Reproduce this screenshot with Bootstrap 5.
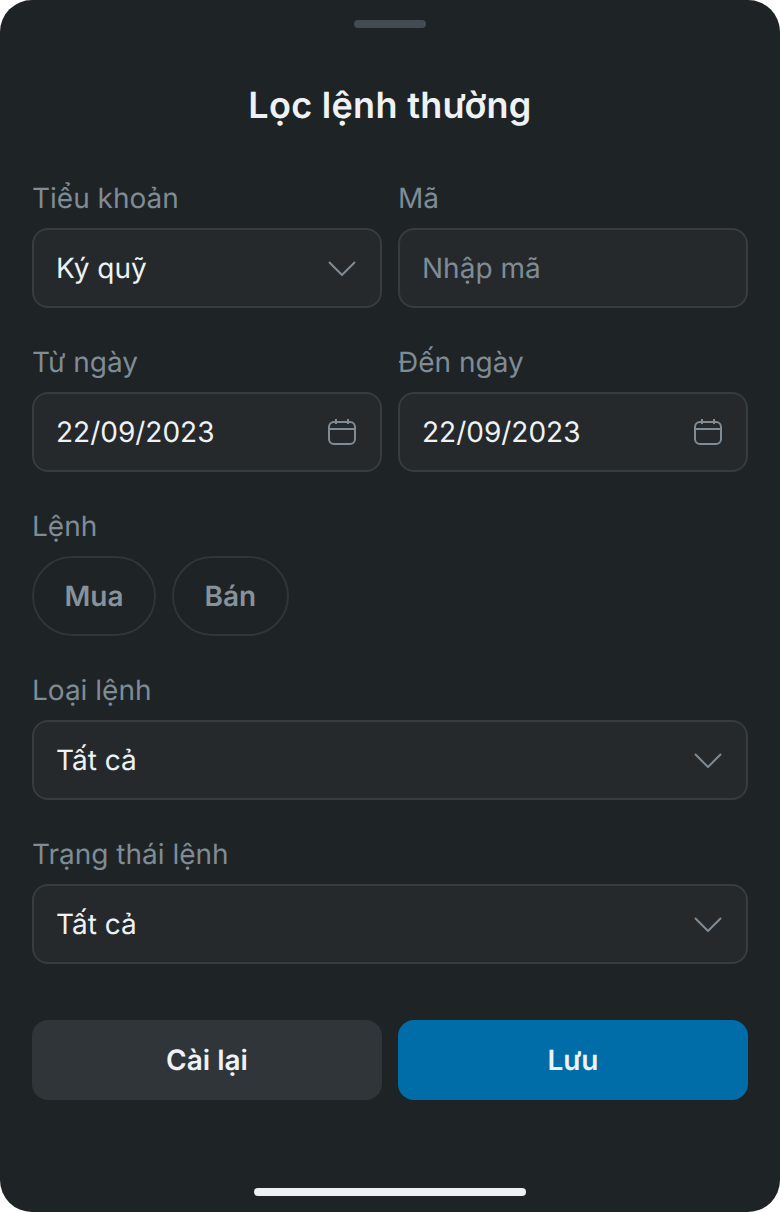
<!DOCTYPE html>
<html lang="vi">
<head>
<meta charset="utf-8">
<title>Lọc lệnh thường</title>
<link href="https://cdn.jsdelivr.net/npm/bootstrap@5.3.0/dist/css/bootstrap.min.css" rel="stylesheet">
<style>
html,body{margin:0;background:#fff;}
body{font-family:Inter,"Noto Sans",sans-serif;text-rendering:geometricPrecision;}
.sheet{width:780px;height:1212px;background:#1e2326;border-radius:32px;padding:20px 32px 16px;}
.grabber{width:72px;height:8px;border-radius:4px;background:#434c52;}
.sheet-title{font-size:36px;line-height:44px;font-weight:600;letter-spacing:.3px;color:#eef2f5;margin:55px 0 51px;}
.fgroup{margin-bottom:34px;}
.flabel{display:block;font-size:28px;line-height:40px;color:#7f8c95;margin-bottom:10px;font-weight:400;}
.fbox{height:80px;width:100%;background:#25292c;border:2px solid #363c40;border-radius:16px;padding:0 22px;font-size:28px;line-height:40px;color:#eef2f5;}
input.fbox{display:block;outline:none;box-shadow:none;text-rendering:geometricPrecision;}
input.fbox:focus{background:#25292c;border-color:#363c40;color:#eef2f5;box-shadow:none;}
input.fbox::placeholder{color:#7f8c95;opacity:1;}
.fbox svg{flex:none;margin-right:2px;}
.chip{height:80px;border:2px solid #2f3539;border-radius:40px;padding:0 30.5px;font-size:28px;font-weight:600;color:#86929c;background:transparent;line-height:1;text-rendering:geometricPrecision;}
.chip:hover{color:#86929c;border-color:#2f3539;}
.act{height:80px;width:100%;border:0;border-radius:16px;font-size:28px;font-weight:600;color:#eef2f5;padding:0;text-rendering:geometricPrecision;}
.act-reset,.act-reset:hover{background:#2f3538;color:#eef2f5;}
.act-save,.act-save:hover{background:#006da8;color:#eef2f5;}
.actions{margin-top:22px;}
.homebar{width:272px;height:8px;border-radius:4px;background:#edf1f4;margin-top:auto;margin-bottom:0;}
</style>
</head>
<body>
<div class="sheet d-flex flex-column">
  <div class="grabber mx-auto"></div>
  <h1 class="sheet-title text-center">Lọc lệnh thường</h1>
  <div class="row gx-3 fgroup">
    <div class="col-6">
      <label class="flabel">Tiểu khoản</label>
      <div class="fbox d-flex align-items-center justify-content-between"><span>Ký quỹ</span>
        <svg width="28" height="16" viewBox="0 0 28 16" fill="none" stroke="#7f8c95" stroke-width="2"><path d="M1 2l13 13L27 2"/></svg></div>
    </div>
    <div class="col-6">
      <label class="flabel">Mã</label>
      <input class="fbox" type="text" placeholder="Nhập mã">
    </div>
  </div>
  <div class="row gx-3 fgroup">
    <div class="col-6">
      <label class="flabel">Từ ngày</label>
      <div class="fbox d-flex align-items-center justify-content-between"><span>22/09/2023</span>
        <svg width="28" height="26" viewBox="0 0 28 26" fill="none" stroke="#7f8c95" stroke-width="2"><rect x="1" y="3" width="26" height="22" rx="5"/><path d="M1 10h26M8 0v5M20 0v5"/></svg></div>
    </div>
    <div class="col-6">
      <label class="flabel">Đến ngày</label>
      <div class="fbox d-flex align-items-center justify-content-between"><span>22/09/2023</span>
        <svg width="28" height="26" viewBox="0 0 28 26" fill="none" stroke="#7f8c95" stroke-width="2"><rect x="1" y="3" width="26" height="22" rx="5"/><path d="M1 10h26M8 0v5M20 0v5"/></svg></div>
    </div>
  </div>
  <div class="fgroup">
    <label class="flabel">Lệnh</label>
    <div class="d-flex gap-3">
      <button type="button" class="btn chip">Mua</button>
      <button type="button" class="btn chip">Bán</button>
    </div>
  </div>
  <div class="fgroup">
    <label class="flabel">Loại lệnh</label>
    <div class="fbox d-flex align-items-center justify-content-between"><span>Tất cả</span>
      <svg width="28" height="16" viewBox="0 0 28 16" fill="none" stroke="#7f8c95" stroke-width="2"><path d="M1 2l13 13L27 2"/></svg></div>
  </div>
  <div class="fgroup">
    <label class="flabel">Trạng thái lệnh</label>
    <div class="fbox d-flex align-items-center justify-content-between"><span>Tất cả</span>
      <svg width="28" height="16" viewBox="0 0 28 16" fill="none" stroke="#7f8c95" stroke-width="2"><path d="M1 2l13 13L27 2"/></svg></div>
  </div>
  <div class="row gx-3 actions">
    <div class="col-6"><button type="button" class="btn act act-reset">Cài lại</button></div>
    <div class="col-6"><button type="button" class="btn act act-save">Lưu</button></div>
  </div>
  <div class="homebar mx-auto"></div>
</div>
<script src="https://cdn.jsdelivr.net/npm/bootstrap@5.3.0/dist/js/bootstrap.bundle.min.js"></script>
</body>
</html>
